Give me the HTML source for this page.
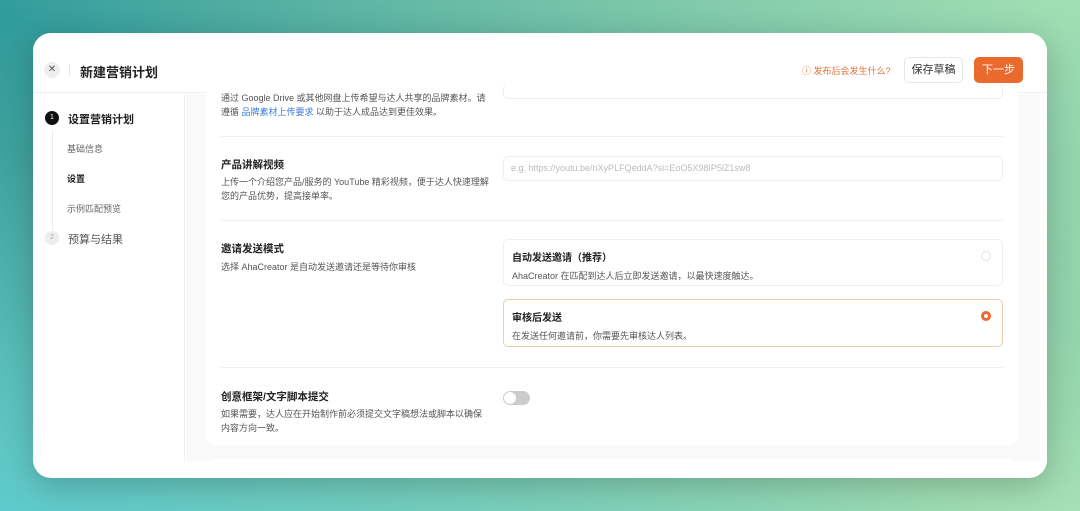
<!DOCTYPE html>
<html><head><meta charset="utf-8"><style>
*{box-sizing:border-box;margin:0;padding:0}
body{width:1080px;height:511px;overflow:hidden;position:relative;font-family:"Liberation Sans","Noto Sans CJK SC",sans-serif;
background:linear-gradient(160deg,#2f9a9c 0%,#4ea89c 35%,#7fc7a4 65%,#a6e0b4 100%);}
.bg2{position:absolute;inset:0;background:linear-gradient(200deg,rgba(170,228,182,.9) 0%,rgba(120,200,170,0) 45%),linear-gradient(20deg,rgba(90,205,215,.8) 0%,rgba(60,160,160,0) 40%)}
.win{position:absolute;left:33px;top:33px;width:1014px;height:445px;background:#fff;border-radius:18px;overflow:hidden;box-shadow:0 8px 30px rgba(0,0,0,.2)}
.hdr{position:absolute;left:0;top:0;right:0;height:60px;border-bottom:1px solid #f0f0f0;background:#fff}
.x{position:absolute;left:11px;top:29px;width:16px;height:16px;border-radius:50%;background:#eee;color:#555;font-size:10px;text-align:center;line-height:16px}
.sep{position:absolute;left:36px;top:31px;width:1px;height:12px;background:#e5e5e5}
.title{position:absolute;left:47px;top:29px;font-size:13px;font-weight:bold;color:#222}
.q{position:absolute;left:769px;top:31px;font-size:9px;color:#e0733a}
.save{position:absolute;left:871px;top:24px;width:59px;height:26px;border:1px solid #e6e6e6;border-radius:5px;font-size:11px;color:#333;text-align:center;line-height:24px}
.next{position:absolute;left:941px;top:24px;width:49px;height:26px;background:#ea6a2e;border-radius:5px;font-size:11px;color:#fff;text-align:center;line-height:26px}
.side{position:absolute;left:0;top:61px;width:152px;bottom:17px;border-right:1px solid #f0f0f0;background:#fff}
.main{position:absolute;left:153px;top:61px;right:7px;bottom:17px;background:#f9f9f9}
.step{position:absolute;font-size:11px}
.card{position:absolute;left:20px;top:-10px;width:812px;height:361px;background:#fff;border-radius:8px}
.c2{position:absolute;left:20px;top:365px;width:812px;height:30px;background:#fff;border-radius:8px}
.lbl{position:absolute;left:15px;font-size:10.5px;font-weight:bold;color:#222}
.d{position:absolute;left:15px;font-size:9px;color:#555;line-height:14px;width:268px}
.hr{position:absolute;left:15px;right:15px;height:1px;background:#f0f0f0}
.inp{position:absolute;left:297px;width:500px;border:1px solid #eee;border-radius:5px}
.opt{position:absolute;left:297px;width:500px;height:47px;border:1px solid #f0f0f0;border-radius:5px}
.opt b{position:absolute;left:8px;top:9px;font-size:10px;color:#222}
.opt span{position:absolute;left:8px;top:29px;font-size:9px;color:#555}
.rad{position:absolute;right:11px;top:11px;width:10px;height:10px;border-radius:50%;border:1px solid #e5e5e5}
</style></head><body><div class="bg2"></div>
<div class="win">
<div class="hdr"><div class="x">✕</div><div class="sep"></div><div class="title">新建营销计划</div>
<div class="q">ⓘ 发布后会发生什么?</div><div class="save">保存草稿</div><div class="next">下一步</div></div>
<div class="side">
<div style="position:absolute;left:12px;top:17px;width:14px;height:14px;border-radius:50%;background:#111;color:#fff;font-size:7px;text-align:center;line-height:14px">1</div>
<div class="step" style="left:35px;top:17px;color:#222;font-weight:bold">设置营销计划</div>
<div style="position:absolute;left:19px;top:36px;width:1px;height:100px;background:#eee"></div>
<div class="step" style="left:34px;top:48px;font-size:9px;color:#666">基础信息</div>
<div class="step" style="left:34px;top:78px;font-size:9px;color:#222;font-weight:bold">设置</div>
<div class="step" style="left:34px;top:108px;font-size:9px;color:#666">示例匹配预览</div>
<div style="position:absolute;left:12px;top:137px;width:14px;height:14px;border-radius:50%;background:#eee;color:#aaa;font-size:7px;text-align:center;line-height:14px">2</div>
<div class="step" style="left:35px;top:137px;color:#555">预算与结果</div>
</div>
<div class="main">
<div class="card">
<div class="inp" style="top:0;height:15px;border-top:none"></div>
<div class="d" style="top:7px">通过 Google Drive 或其他网盘上传希望与达人共享的品牌素材。请遵循 <span style="color:#3a7bd5">品牌素材上传要求</span> 以助于达人成品达到更佳效果。</div>
<div class="hr" style="top:52px"></div>
<div class="lbl" style="top:73px">产品讲解视频</div>
<div class="d" style="top:91px">上传一个介绍您产品/服务的 YouTube 精彩视频，便于达人快速理解您的产品优势，提高接单率。</div>
<div class="inp" style="top:72px;height:25px;font-size:9px;color:#bbb;line-height:23px;padding-left:7px">e.g. https://youtu.be/nXyPLFQeddA?si=EoO5X98IP5lZ1sw8</div>
<div class="hr" style="top:136px"></div>
<div class="lbl" style="top:157px">邀请发送模式</div>
<div class="d" style="top:176px;width:300px">选择 AhaCreator 是自动发送邀请还是等待你审核</div>
<div class="opt" style="top:155px"><b>自动发送邀请（推荐）</b><span>AhaCreator 在匹配到达人后立即发送邀请，以最快速度触达。</span><div class="rad"></div></div>
<div class="opt" style="top:215px;height:48px;border-color:#f3c9ad"><b>审核后发送</b><span>在发送任何邀请前，你需要先审核达人列表。</span><div class="rad" style="border:3px solid #ea6a2e"></div></div>
<div class="hr" style="top:283px"></div>
<div class="lbl" style="top:305px">创意框架/文字脚本提交</div>
<div class="d" style="top:323px">如果需要，达人应在开始制作前必须提交文字稿想法或脚本以确保内容方向一致。</div>
<div style="position:absolute;left:297px;top:307px;width:27px;height:14px;border-radius:7px;background:#ccc"><div style="position:absolute;left:1px;top:1px;width:12px;height:12px;border-radius:50%;background:#fff"></div></div>
</div>
<div class="c2"></div>
</div>
</div>
</body></html>
